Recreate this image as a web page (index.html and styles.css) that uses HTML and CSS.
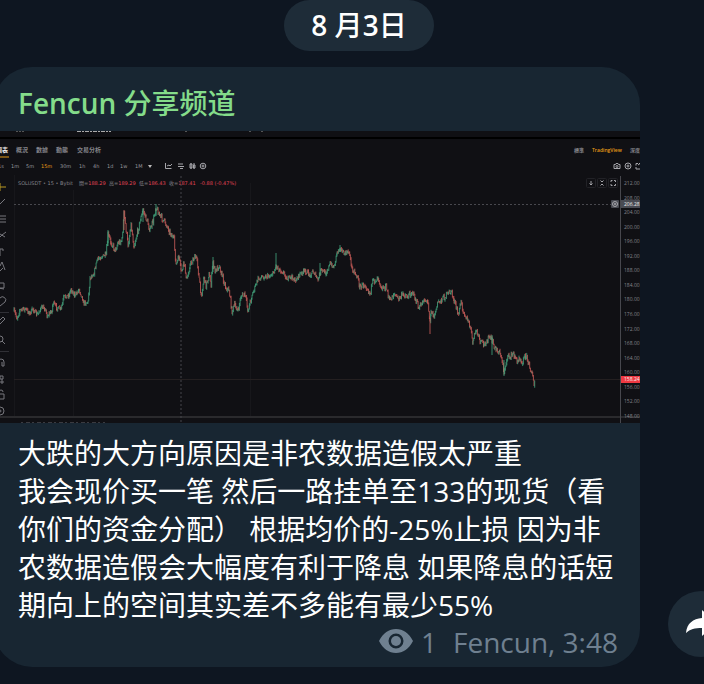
FILE: index.html
```
<!DOCTYPE html>
<html lang="zh-CN">
<head>
    <meta charset="UTF-8">
    <meta name="viewport" content="width=device-width, initial-scale=1.0">
    <title>Fencun 分享频道</title>
    <link rel="stylesheet" href="styles.css">
</head>
<body>
    <main class="chat">
        <div class="date-row">
            <time class="date"><span class="latin">8</span> 月<span class="latin">3</span>日</time>
        </div>
        <div class="message-row">
            <article class="message">
                <h1 class="author"><span class="latin">Fencun</span> 分享频道</h1>
                <svg class="photo" viewBox="-6 131 646 292" role="img" aria-label="SOLUSDT 15m">
                    <rect x="-6" y="131" width="646" height="292" fill="#101014"/>
                    <rect x="-6" y="137" width="646" height="2" fill="#000"/>
                    <path d="M16 131.5h8M185 131.5h3M249 131.5h2M261 131.5h2" stroke="#555" stroke-dasharray="2 1"/>
                    <path d="M77 131.5h34" stroke="#aaa" stroke-dasharray="4 1 2 1"/>

                    <!-- Tabs -->
                    <g class="tabs">
                        <text x="-4" y="152" class="on">圖表</text>
                        <text x="16" y="152">概況</text>
                        <text x="36" y="152">數據</text>
                        <text x="56" y="152">動態</text>
                        <text x="77" y="152">交易分析</text>
                        <text x="574" y="152" class="small">標準</text>
                        <text x="592" y="152" class="small gold">TradingView</text>
                        <text x="630" y="152" class="small">深度</text>
                    </g>
                    <path d="M-6 157h15" stroke="#e59a16"/>

                    <!-- Intervals -->
                    <g class="intervals">
                        <text x="-2" y="168">1s</text>
                        <text x="11" y="168">1m</text>
                        <text x="26" y="168">5m</text>
                        <text x="41" y="168" class="gold">15m</text>
                        <text x="60" y="168">30m</text>
                        <text x="79" y="168">1h</text>
                        <text x="93" y="168">4h</text>
                        <text x="107" y="168">1d</text>
                        <text x="120" y="168">1w</text>
                        <text x="135" y="168">1M</text>
                    </g>
                    <path d="M148 165h4l-2 3z" fill="#bbb"/>
                    <g class="icons">
                        <path d="M165.500 163v5.500h6M167 166l2-1 1 1 2-2M178 164h5M178 166.500h6M180 168.500h3M190 164h2v4h-2zM191 163v6M193.500 165h1.500v3h-1.500zM194 163v6"/>
                        <circle cx="203" cy="166" r="2.800"/><circle cx="203" cy="166" r="1"/>
                        <path d="M614 164.500h1.500l.5-1h2l.5 1h1.500v4h-6z"/><circle cx="617" cy="166.500" r="1"/>
                        <circle cx="628" cy="166" r="3"/><circle cx="628" cy="166" r="1"/>
                        <path d="M638 163.500h-2v2M636 167v2h2M639 163.500h1M638 169h2M638 165l2-1.500"/>
                    </g>

                    <!-- Legend -->
                    <g class="legend">
                        <text x="18" y="185">SOLUSDT • 15 • Bybit</text>
                        <text x="79" y="185">開=<tspan class="red">188.29</tspan></text>
                        <text x="109" y="185">高=<tspan class="red">189.29</tspan></text>
                        <text x="139" y="185">低=<tspan class="red">186.43</tspan></text>
                        <text x="169" y="185">收=<tspan class="red">187.41</tspan></text>
                        <text x="200" y="185" class="red">-0.88 (-0.47%)</text>
                    </g>
                    <g fill="none" stroke="#222227">
                        <rect x="586.500" y="178.500" width="9" height="9" rx="1"/>
                        <rect x="597.500" y="178.500" width="9" height="9" rx="1"/>
                        <rect x="608.500" y="178.500" width="9" height="9" rx="1"/>
                    </g>
                    <path class="icons" d="M591 181v4M589.500 183.500l1.500 1.500 1.500-1.500M600.500 180.500l1.500 1.500 1.500-1.500M600.500 185.500l1.500-1.500 1.500 1.500M611 182v-1.500h1.500M614 180.500h1.500v1.500M615.500 184v1.500h-1.500M612.500 185.500h-1.500v-1.500"/>

                    <!-- Drawing tools -->
                    <path d="M0 183v8M-3 187h9" stroke="#b99922"/>
                    <g class="icons tools">
                        <path d="M-2 206l7-7M-3 216h9M-3 219h9M-3 222h9M-2 239l4-4 4-3M0 234l5 3M-3 249h6v2M0 249v7"/>
                        <path d="M0 266l2-4 3 8M-1 272l4-4M-3 283h7v5h-7zM-2 288l6 1"/>
                        <path d="M0 306l-4-5a3 3 0 0 1 4-3 3 3 0 0 1 5 4zM-3 323l6-6 2 2-6 6z"/>
                        <circle cx="0" cy="339" r="3"/>
                        <path d="M2 341l3 3M-2 366v-4a3 3 0 0 1 6 0v4h-2v-4M0 376h3v3h-3zM0 382h4M2 379v5M-3 394h7v5h-7zM-1 394v-2a2 2 0 0 1 4 0"/>
                        <circle cx="0" cy="411" r="4"/><circle cx="0" cy="411" r="1"/>
                    </g>
                    <path d="M-6 312.500h15M-6 351.500h15" stroke="#303036"/>

                    <!-- Grid and axes -->
                    <path d="M73.500 190v226M250.500 183v233M14.500 175v241" stroke="#17171b"/>
                    <path d="M14 379.500h606" stroke="#241f20"/>
                    <path d="M-6 417h646" stroke="#2a2a2d" stroke-width="2"/>
                    <path d="M620.500 176v247" stroke="#47474d"/>
                    <path d="M14 204.500h597" stroke="#48484e" stroke-dasharray="2 2"/>
                    <path d="M181 176v247" stroke="#44444b" stroke-dasharray="2 2"/>
                    <path d="M21 422.500h84" stroke="#3a3a40" stroke-dasharray="2 3 4 2"/>

                    <g id="candles"></g>
                    <g id="prices" class="prices"></g>

                    <rect x="611" y="200" width="8" height="8" rx="1" fill="#494b53"/>
                    <g class="icons"><circle cx="615" cy="204" r="2.500"/><path d="M614 204h2M615 203v2"/></g>
                    <rect x="621" y="200" width="19" height="8" fill="#494b53"/>
                    <text x="624" y="206" class="mark">206.28</text>
                    <rect x="621" y="376" width="19" height="7" fill="#ef3942"/>
                    <text x="624" y="381" class="mark">158.24</text>
                </svg>
                <p class="text">大跌的大方向原因是非农数据造假太严重<br>我会现价买一笔 然后一路挂单至133的现货（看你们的资金分配） 根据均价的-25%止损 因为非农数据造假会大幅度有利于降息 如果降息的话短期向上的空间其实差不多能有最少55%</p>
                <footer class="meta">
                    <svg class="eye" viewBox="0 0 34 26" aria-hidden="true">
                        <path fill="currentColor" fill-rule="evenodd" d="M0 13C4 5 10 1 17 1s13 4 17 12c-4 8-10 12-17 12S4 21 0 13zM17 5.500a7.500 7.500 0 1 0 0 15 7.500 7.500 0 0 0 0-15z"/>
                        <circle cx="17" cy="13" r="5" fill="currentColor"/>
                    </svg>
                    <span class="views">1</span>
                    <span>Fencun, 3:48</span>
                </footer>
            </article>
            <button class="share" type="button" aria-label="分享">
                <svg viewBox="0 0 30 28" aria-hidden="true">
                    <path fill="#fff" d="M16 0v8C7 9 1 13 0 23c4-4 9-5 16-5v8l14-13z"/>
                </svg>
            </button>
        </div>
    </main>
    <script src="chart.js"></script>
</body>
</html>
```
FILE: styles.css
```
body {
    margin: 0;
    background-color: #0e1621;
    color: #fff;
    font-family: "Open Sans", "Noto Sans CJK SC", sans-serif;
    font-size: 28px;
    line-height: 38px;
    overflow: hidden;
}
.chat {
    display: flex;
    flex-direction: column;
    gap: 16px;
}
.date-row {
    display: flex;
    justify-content: center;
    padding-left: 14px;
}
.date {
    padding: 6px 27px 7px;
    border-radius: 26px;
    background-color: #1e2c38;
    font-weight: 500;
}
.latin {
    font-weight: 600;
}
/* The row runs past both window edges */
.message-row {
    display: flex;
    align-items: flex-end;
    gap: 28px;
    margin: 0 -30px 0 -6px;
}
.message {
    flex: 1;
    min-width: 0;
    border-radius: 38px;
    background-color: #182632;
    overflow: hidden;
}
.author {
    margin: 0;
    padding: 17px 24px 9px;
    color: #84dc8a;
    font-size: 28px;
    font-weight: 500;
}
.photo {
    display: block;
    width: 100%;
}
.text {
    margin: 0;
    padding: 11px 18px 0 24px;
}
.meta {
    display: flex;
    align-items: center;
    justify-content: flex-end;
    margin-top: -1px;
    padding: 0 22px 6px;
    color: #6f8090;
}
.eye {
    width: 34px;
    height: 26px;
    margin-right: 8px;
    margin-bottom: 2px;
}
.views {
    margin-right: 16px;
}
.share {
    display: flex;
    align-items: center;
    justify-content: center;
    width: 66px;
    height: 66px;
    margin-bottom: 10px;
    padding: 0;
    border: none;
    border-radius: 50%;
    background-color: #1e2c38;
    cursor: pointer;
}
.share svg {
    width: 30px;
    height: 28px;
}

/* Chart picture */
.photo text {
    font-family: "Open Sans", "Noto Sans CJK TC", sans-serif;
    font-size: 5px;
    fill: #85858b;
}
.photo .tabs text {
    font-size: 6px;
    font-weight: 600;
}
.photo .tabs .small {
    font-size: 5px;
}
.photo .tabs .on,
.photo .mark {
    fill: #eee;
}
.photo .intervals text {
    font-family: "DejaVu Sans", sans-serif;
    fill: #98989e;
}
.photo .legend text {
    font-family: "DejaVu Sans", "Noto Sans CJK TC", sans-serif;
}
.photo .tabs .gold,
.photo .intervals .gold {
    fill: #e59a16;
}
.photo .legend .red {
    fill: #e04455;
}
.icons {
    fill: none;
    stroke: #a5a5aa;
}
.tools {
    stroke: #77777d;
}
```
FILE: chart.js
```
const SVG_NS = 'http://www.w3.org/2000/svg';

// x, y of the price line
const points = [
    [14,311],[17,318],[20,310],[25,309],[30,313],[33,309],[37,315],[41,308],[45,308],[47,316],[52,311],
    [53,303],[57,308],[61,309],[64,297],[69,295],[71,289],[75,296],[79,289],[84,303],[88,302],[90,278],
    [94,273],[97,260],[101,257],[106,255],[108,235],[111,242],[115,250],[118,243],[122,240],[124,213],
    [128,245],[131,225],[134,246],[138,230],[141,218],[143,210],[146,218],[150,230],[153,222],[156,207],
    [160,216],[165,222],[170,232],[174,240],[176,265],[179,257],[181,272],[184,264],[187,280],[190,265],
    [194,258],[197,258],[201,297],[204,277],[206,286],[209,275],[211,284],[213,262],[215,272],[219,265],
    [222,275],[226,288],[229,290],[232,311],[235,305],[238,311],[241,296],[245,295],[248,310],[252,295],
    [258,279],[262,277],[270,276],[274,272],[276,266],[280,270],[284,273],[287,279],[292,277],[295,281],
    [300,274],[305,271],[310,275],[313,271],[318,280],[321,270],[326,273],[330,264],[334,267],[337,252],
    [340,248],[344,254],[349,252],[352,268],[357,276],[360,287],[365,284],[370,293],[373,282],[378,277],
    [382,288],[386,287],[390,301],[394,293],[398,299],[404,294],[408,297],[412,291],[416,301],[419,309],
    [424,299],[428,303],[430,320],[431,310],[434,317],[438,302],[445,297],[451,291],[454,300],[458,315],
    [461,303],[466,317],[470,327],[473,342],[476,330],[480,341],[484,345],[489,337],[492,341],[496,350],
    [500,352],[504,372],[507,358],[512,355],[515,355],[517,364],[519,356],[522,362],[526,355],[529,365],
    [532,372],[534,387],[535,379]
];
// Long wicks: x, top, bottom
const wicks = [
    [213,257,272],[276,253,268],[430,318,334],[108,230,246],[124,210,230],[143,208,222],
    [156,204,216],[340,245,252],[320,263,276],[492,335,355],[504,360,376]
];

const candles = document.getElementById('candles');
const prices = document.getElementById('prices');

const addLine = (x, top, bottom, color) => {
    const line = document.createElementNS(SVG_NS, 'path');
    line.setAttribute('d', `M${x} ${top}V${bottom}`);
    line.setAttribute('stroke', color);
    line.setAttribute('stroke-width', '0.8');
    candles.appendChild(line);
};

// Seeded, so the wicks are the same on every load
let seed = 7;
const random = () => {
    seed = (seed * 16807) % 2147483647;
    return seed / 2147483647;
};

let last = points[0][1];
for (let i = 1; i < points.length; i++) {
    const [x0, y0] = points[i - 1];
    const [x1, y1] = points[i];
    const busy = (x0 > 106 && x0 < 250) || x0 > 350 ? 6 : 4;
    for (let x = x0; x < x1; x += 0.7) {
        const y = y0 + (y1 - y0) * (x - x0) / (x1 - x0) + (random() - 0.5) * busy;
        const color = y > last ? '#d0605c' : '#45aa82';
        addLine(x, Math.min(y, last) - random() * 2, Math.max(y, last) + random() * 2, color);
        last = y;
    }
}
wicks.forEach(([x, top, bottom], i) => addLine(x, top, bottom, i === 2 || i === 4 ? '#d0605c' : '#45aa82'));

// Price axis
for (let i = 0; i <= 16; i++) {
    const label = document.createElementNS(SVG_NS, 'text');
    label.setAttribute('x', 624);
    label.setAttribute('y', 185 + i * 14.56);
    label.textContent = (212 - i * 4).toFixed(2);
    prices.appendChild(label);
}
```
